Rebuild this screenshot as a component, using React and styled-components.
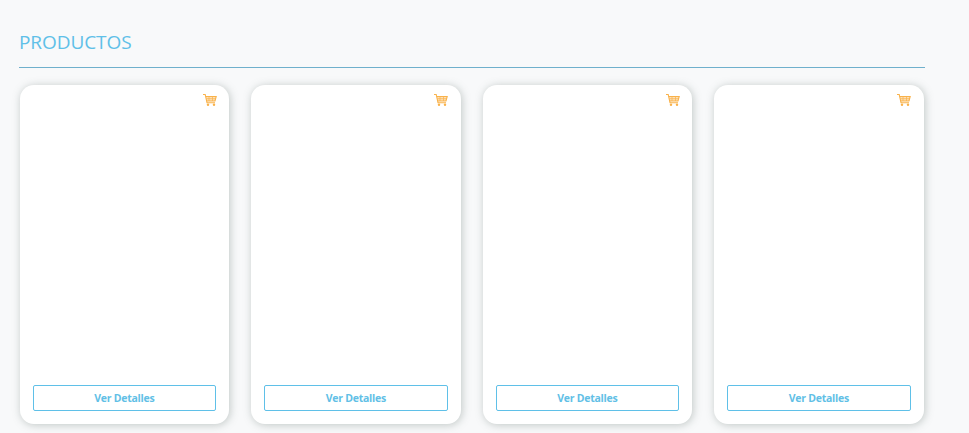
import styled, { createGlobalStyle } from "styled-components";

const Global = createGlobalStyle`
  html, body { margin: 0; padding: 0; background: #f8f9fa; }
  body { font-family: "Open Sans", "Liberation Sans", sans-serif; overflow: hidden; }
`;

const Page = styled.div`
  width: 969px;
  height: 433px;
  box-sizing: border-box;
  padding: 29px 44px 0 19px;
  overflow: hidden;
`;

const Title = styled.h2`
  margin: 0;
  height: 38px;
  font-size: 19px;
  line-height: 26px;
  font-weight: 400;
  letter-spacing: -0.08px;
  color: #5fc0e8;
  border-bottom: 1px solid #6fb0cc;
`;

const Grid = styled.div`
  display: grid;
  grid-template-columns: repeat(4, 209.5px);
  column-gap: 22px;
  padding: 17px 0 0 0.6px;
`;

const Card = styled.div`
  position: relative;
  height: 339px;
  box-sizing: border-box;
  padding: 0 13px 13px;
  display: flex;
  flex-direction: column;
  justify-content: flex-end;
  background: #fff;
  border-radius: 14px;
  box-shadow: 1px 1px 8px rgba(100, 115, 110, 0.38);
`;

const CartBadge = styled.span`
  position: absolute;
  top: 8px;
  right: 12.5px;
  display: flex;
  color: #f9b24a;
`;

const DetailButton = styled.button`
  height: 26px;
  padding: 0;
  font-family: inherit;
  font-size: 10.5px;
  font-weight: 700;
  letter-spacing: -0.25px;
  color: #62bfe6;
  background: #fff;
  border: 1px solid #5fc0e8;
  border-radius: 2px;
`;

const CartIcon = () => (
  <svg width="14" height="14" viewBox="0 0 14 14" fill="none" stroke="currentColor" strokeWidth="1.1">
    <path d="M0 1.5h2.2L4 9.7h8" />
    <path d="M2.8 3.5h10.4L12 8H3.8" fill="currentColor" fillOpacity="0.4" />
    <path d="M6 3.5V8M9.5 3.5V8M3.4 5.7h9.3" strokeWidth="0.7" />
    <circle cx="5" cy="11.8" r="1.2" fill="currentColor" stroke="none" />
    <circle cx="11" cy="11.8" r="1.2" fill="currentColor" stroke="none" />
  </svg>
);

const products = [1, 2, 3, 4];

export default function App() {
  return (
    <Page>
      <Global />
      <Title>PRODUCTOS</Title>
      <Grid>
        {products.map((id) => (
          <Card key={id}>
            <CartBadge>
              <CartIcon />
            </CartBadge>
            <DetailButton>Ver Detalles</DetailButton>
          </Card>
        ))}
      </Grid>
    </Page>
  );
}
